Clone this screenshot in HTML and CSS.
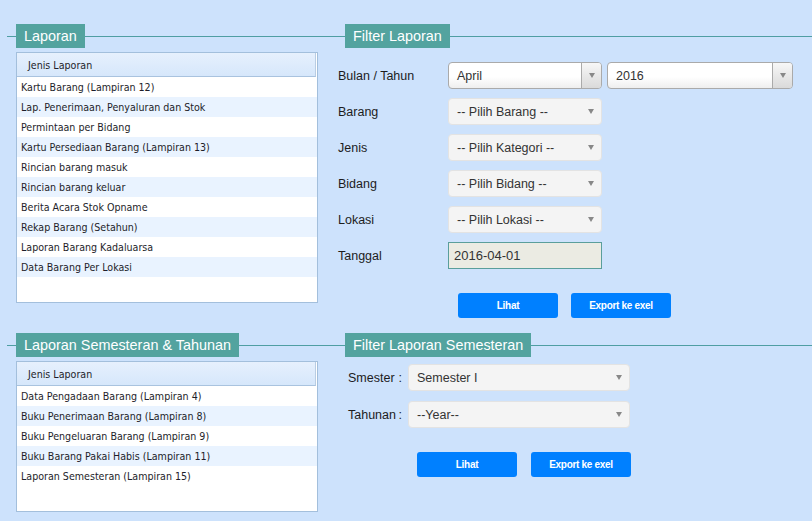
FILE: index.html
```html
<!DOCTYPE html>
<html>
<head>
<meta charset="utf-8">
<title>Laporan</title>
<link rel="stylesheet" href="styles.css">
</head>
<body>
<div class="page">
  <section class="band band-top">
    <div class="col-left">
      <div class="sec-head left"><span class="sec-title">Laporan</span></div>
      <div class="list list-top">
        <div class="list-head"><span>Jenis Laporan</span></div>
        <div class="row">Kartu Barang (Lampiran 12)</div>
        <div class="row">Lap. Penerimaan, Penyaluran dan Stok</div>
        <div class="row">Permintaan per Bidang</div>
        <div class="row">Kartu Persediaan Barang (Lampiran 13)</div>
        <div class="row">Rincian barang masuk</div>
        <div class="row">Rincian barang keluar</div>
        <div class="row">Berita Acara Stok Opname</div>
        <div class="row">Rekap Barang (Setahun)</div>
        <div class="row">Laporan Barang Kadaluarsa</div>
        <div class="row">Data Barang Per Lokasi</div>
      </div>
    </div>
    <div class="col-right">
      <div class="sec-head right"><span class="sec-title">Filter Laporan</span></div>
      <div class="form form-top">
        <div class="lbl">Bulan / Tahun</div>
        <div class="pair">
          <div class="sel combo w154"><span class="val">April</span><span class="abox"><span class="tri"></span></span></div>
          <div class="sel combo w186"><span class="val">2016</span><span class="abox"><span class="tri"></span></span></div>
        </div>
        <div class="lbl">Barang</div>
        <div class="sel grey w154"><span class="val">-- Pilih Barang --</span><span class="tri"></span></div>
        <div class="lbl">Jenis</div>
        <div class="sel grey w154"><span class="val">-- Pilih Kategori --</span><span class="tri"></span></div>
        <div class="lbl">Bidang</div>
        <div class="sel grey w154"><span class="val">-- Pilih Bidang --</span><span class="tri"></span></div>
        <div class="lbl">Lokasi</div>
        <div class="sel grey w154"><span class="val">-- Pilih Lokasi --</span><span class="tri"></span></div>
        <div class="lbl">Tanggal</div>
        <div class="date">2016-04-01</div>
      </div>
      <div class="btns btns-top">
        <button class="btn">Lihat</button>
        <button class="btn">Export ke exel</button>
      </div>
    </div>
  </section>

  <section class="band band-bottom">
    <div class="col-left">
      <div class="sec-head left"><span class="sec-title">Laporan Semesteran &amp; Tahunan</span></div>
      <div class="list list-bottom">
        <div class="list-head"><span>Jenis Laporan</span></div>
        <div class="row">Data Pengadaan Barang (Lampiran 4)</div>
        <div class="row">Buku Penerimaan Barang (Lampiran 8)</div>
        <div class="row">Buku Pengeluaran Barang (Lampiran 9)</div>
        <div class="row">Buku Barang Pakai Habis (Lampiran 11)</div>
        <div class="row">Laporan Semesteran (Lampiran 15)</div>
      </div>
    </div>
    <div class="col-right">
      <div class="sec-head right"><span class="sec-title">Filter Laporan Semesteran</span></div>
      <div class="form form-bottom">
        <div class="lbl2"><span>Smester</span><span>:</span></div>
        <div class="sel grey w222"><span class="val">Semester I</span><span class="tri"></span></div>
        <div class="lbl2"><span>Tahunan</span><span>:</span></div>
        <div class="sel grey w222"><span class="val">--Year--</span><span class="tri"></span></div>
      </div>
      <div class="btns btns-bottom">
        <button class="btn">Lihat</button>
        <button class="btn">Export ke exel</button>
      </div>
    </div>
  </section>
</div>
</body>
</html>
```

FILE: styles.css
```css
html, body {
  margin: 0;
  padding: 0;
}
body {
  background: #cde2fc;
  font-family: "Liberation Sans", Arial, sans-serif;
  color: #222;
}
.page {
  width: 812px;
  padding-top: 24px;
}
.band {
  display: flex;
  align-items: flex-start;
}
.band-bottom {
  margin-top: 15px;
}
.col-left {
  width: 330px;
  box-sizing: border-box;
  padding-left: 7px;
}
.col-right {
  width: 482px;
}

/* section headers */
.sec-head {
  display: flex;
  align-items: center;
  height: 24px;
}
.sec-head::before,
.sec-head::after {
  content: "";
  height: 1px;
  background: #4f9ea3;
}
.sec-head.left::before { width: 9px; }
.sec-head.right::before { width: 15px; }
.sec-head::after { flex: 1; }
.sec-title {
  background: #53a39f;
  color: #fff;
  font-size: 14.4px;
  height: 24px;
  line-height: 24px;
  padding: 0 8px;
  white-space: nowrap;
}

/* lists */
.list {
  margin-top: 4px;
  margin-left: 9px;
  width: 302px;
  box-sizing: border-box;
  border: 1px solid #a3bfdc;
  background: #fff;
  font-family: "DejaVu Sans Condensed", "DejaVu Sans", sans-serif;
  font-stretch: condensed;
  font-size: 10.6px;
  color: #1e1e2a;
}
.list-top { height: 251px; }
.list-bottom { height: 151px; }
.list-head {
  height: 24px;
  box-sizing: border-box;
  border-bottom: 1px solid #a9c3df;
  border-right: 1px solid #b9cde3;
  margin-right: 1px;
  background: linear-gradient(#e6f0fd, #d6e7fb);
  display: flex;
  align-items: center;
  padding-left: 11px;
}
.row {
  height: 20px;
  line-height: 20px;
  padding-left: 4px;
  white-space: nowrap;
}
.row:nth-child(odd) {
  background: #e9f3ff;
}

/* form */
.form {
  display: grid;
  align-items: center;
}
.form-top {
  margin-top: 14px;
  padding-left: 8px;
  grid-template-columns: 110px auto;
  row-gap: 9px;
}
.form-bottom {
  margin-top: 7px;
  padding-left: 18px;
  grid-template-columns: 60px auto;
  row-gap: 10px;
}
.lbl {
  font-size: 12.5px;
  color: #1c1c1c;
}
.lbl2 {
  font-size: 12.5px;
  color: #1c1c1c;
  width: 54px;
  display: flex;
  justify-content: space-between;
}
.pair {
  display: flex;
  gap: 5px;
}
.sel {
  height: 27px;
  box-sizing: border-box;
  border-radius: 4px;
  display: flex;
  align-items: center;
  font-size: 12.5px;
  color: #333;
}
.w154 { width: 154px; }
.w186 { width: 186px; }
.w222 { width: 222px; }
.sel .val {
  padding-left: 8px;
  flex: 1;
  white-space: nowrap;
}
.sel.grey {
  background: #f4f4f4;
  border: 1px solid #e3e3e3;
}
.sel.grey .tri {
  margin-right: 7px;
}
.tri {
  width: 0;
  height: 0;
  border-left: 3.5px solid transparent;
  border-right: 3.5px solid transparent;
  border-top: 5px solid #888;
}
.sel.combo {
  border: 1px solid #aaa;
  background: linear-gradient(#ffffff 55%, #eeeeee);
  overflow: hidden;
}
.abox {
  width: 19px;
  height: 100%;
  border-left: 1px solid #aaa;
  background: linear-gradient(#f7f7f7, #dadada);
  display: flex;
  align-items: center;
  justify-content: center;
}
.date {
  width: 154px;
  height: 27px;
  box-sizing: border-box;
  border: 1px solid #5a9e9b;
  background: #ebebe3;
  font-size: 13px;
  color: #333;
  padding-left: 5px;
  display: flex;
  align-items: center;
}

/* buttons */
.btns {
  display: flex;
}
.btns-top {
  margin-top: 24px;
  padding-left: 128px;
  gap: 13px;
}
.btns-bottom {
  margin-top: 24px;
  padding-left: 87px;
  gap: 14px;
}
.btn {
  width: 100px;
  height: 25px;
  border: none;
  border-radius: 3px;
  background: #0080ff;
  color: #fff;
  font-family: "Liberation Sans", Arial, sans-serif;
  font-weight: bold;
  font-size: 10px;
  letter-spacing: -0.3px;
  padding: 0;
}
```
